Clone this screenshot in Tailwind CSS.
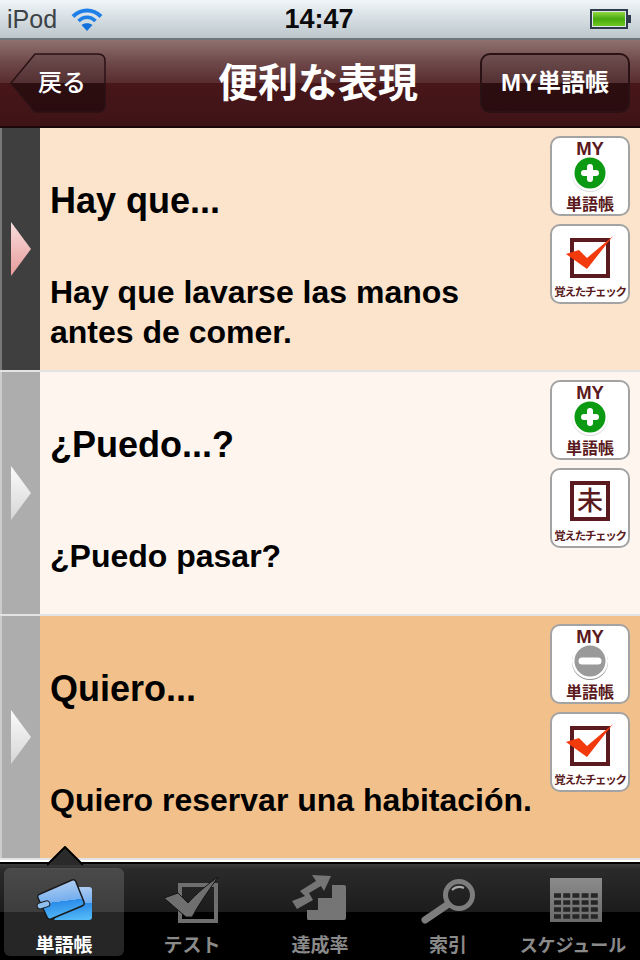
<!DOCTYPE html>
<html lang="ja">
<head>
    <meta charset="UTF-8">
    <title>便利な表現</title>
    <meta name="viewport" content="width=device-width, initial-scale=1.0">
    <script src="https://cdn.jsdelivr.net/npm/@tailwindcss/browser@4"></script>
</head>
<body class="bg-black">
<div class="relative w-[640px] h-[960px] overflow-hidden flex flex-col font-['Liberation_Sans','Noto_Sans_CJK_JP',sans-serif]">

    <!-- status bar -->
    <div class="h-[40px] flex items-center justify-between pl-[7px] pr-[9px] bg-gradient-to-b from-[#f0f6f9] to-[#bcc6cb] border-b-2 border-[#6d767d]">
        <div class="w-[200px] flex items-center gap-[14px]">
            <span class="text-[25px] leading-none text-[#3c4246]">iPod</span>
            <svg width="32" height="26" viewBox="0 0 32 26" fill="none">
                <path d="M2 10.500C10 2.500 22 2.500 30 10.500" stroke="#1f7fe8" stroke-width="4"/>
                <path d="M7.500 15C12.500 10 19.500 10 24.500 15" stroke="#1f7fe8" stroke-width="3.500"/>
                <path d="M16 25L10.500 19C13.500 16.500 18.500 16.500 21.500 19Z" fill="#1272dc"/>
            </svg>
        </div>
        <span class="text-[27px] leading-none font-bold text-[#0a0a0a]">14:47</span>
        <div class="w-[200px] flex justify-end items-center">
            <div class="w-[38px] h-[20px] border-2 border-[#2f3b4c] p-[1px] bg-[#dfe5e8]">
                <div class="h-full bg-gradient-to-b from-[#8fd93d] via-[#46a80c] to-[#6fc81f]"></div>
            </div>
            <div class="w-[3px] h-[8px] bg-[#2f3b4c]"></div>
        </div>
    </div>

    <!-- nav bar -->
    <div class="h-[88px] flex items-center justify-between px-[10px] border-b-2 border-[#1c0709] bg-[linear-gradient(#8f7170_0%,#6f4a4b_25%,#592c2f_50%,#471619_50%,#3f1417_100%)]">
        <div class="w-[146px]">
            <div class="relative w-[96px] h-[60px] flex items-center justify-center pl-[8px]">
                <svg class="absolute inset-0" width="96" height="60" viewBox="0 0 96 60">
                    <defs>
                        <linearGradient id="navbtn" x1="0" y1="0" x2="0" y2="1">
                            <stop offset="0" stop-color="#6f4f50"/>
                            <stop offset="0.5" stop-color="#533032"/>
                            <stop offset="0.5" stop-color="#2c0d10"/>
                            <stop offset="1" stop-color="#2a0c0f"/>
                        </linearGradient>
                    </defs>
                    <path d="M1 30L25 1H88Q95 1 95 8V52Q95 59 88 59H25Z" fill="url(#navbtn)" stroke="#2a1214" stroke-width="1.500"/>
                </svg>
                <span class="relative text-[24px] leading-none font-medium text-white">戻る</span>
            </div>
        </div>
        <h1 class="text-[40px] leading-none font-bold text-white">便利な表現</h1>
        <div class="w-[150px] h-[60px] flex items-center justify-center rounded-[10px] border-2 border-[#2a1214] bg-[linear-gradient(#6f4f50_0%,#533032_50%,#2c0d10_50%,#2a0c0f_100%)]">
            <span class="text-[24px] leading-none font-bold text-white">MY単語帳</span>
        </div>
    </div>

    <!-- row 1 -->
    <div class="h-[242px] flex bg-[#fbe3cc]">
        <div class="w-[40px] flex items-center bg-[#3f3f3f] border-l-2 border-[#777777]">
            <svg class="ml-[8px]" width="22" height="56" viewBox="0 0 22 56">
                <defs>
                    <linearGradient id="pink" x1="0" y1="0" x2="0" y2="1">
                        <stop offset="0" stop-color="#f8dedd"/>
                        <stop offset="1" stop-color="#e89a9a"/>
                    </linearGradient>
                </defs>
                <path d="M1 1L21 28L1 55Z" fill="url(#pink)"/>
            </svg>
        </div>
        <div class="flex-1 pl-[10px] text-black font-bold">
            <div class="h-[130px] pt-[16px] flex items-center text-[36px] leading-none">Hay que...</div>
            <div class="h-[108px] flex items-center text-[32px] leading-[40px]">Hay que lavarse las manos<br>antes de comer.</div>
        </div>
        <div class="w-[80px] mr-[10px] pt-[8px] flex flex-col gap-[8px]">
            <div class="h-[80px] flex flex-col items-center rounded-[10px] border-2 border-[#a3a3a3] bg-white text-[#5a1a20] font-bold">
                <span class="text-[18.500px] leading-[18px] mt-[2px]">MY</span>
                <svg class="-mt-[4px]" width="40" height="38" viewBox="0 0 40 38">
                    <circle cx="20" cy="20" r="18" fill="#d9d9d9"/>
                    <circle cx="20" cy="19" r="18" fill="#ffffff"/>
                    <circle cx="20" cy="19" r="15.500" fill="#0b9a12"/>
                    <path d="M20 13V25M14 19H26" stroke="#ffffff" stroke-width="6" stroke-linecap="round"/>
                </svg>
                <span class="text-[16px] leading-[18px] mt-[4px]">単語帳</span>
            </div>
            <div class="h-[80px] flex flex-col items-center rounded-[10px] border-2 border-[#a3a3a3] bg-white text-[#5a1a20] font-bold">
                <svg class="mt-[10px]" width="48" height="44" viewBox="0 0 48 44">
                    <rect x="6" y="4" width="36" height="36" fill="#ffffff" stroke="#5a1a20" stroke-width="4"/>
                    <path d="M0 18L13 14L21 22L47 0L21 33Z" fill="#f23a0c"/>
                </svg>
                <span class="text-[11.500px] leading-none mt-[7px] tracking-[-1.300px] whitespace-nowrap">覚えたチェック</span>
            </div>
        </div>
    </div>
    <div class="h-[2px] bg-[#e3e3e3]"></div>

    <!-- row 2 -->
    <div class="h-[242px] flex bg-[#fdf5ee]">
        <div class="w-[40px] flex items-center bg-[#adadad] border-l-2 border-[#cccccc]">
            <svg class="ml-[8px]" width="22" height="56" viewBox="0 0 22 56">
                <defs>
                    <linearGradient id="grey" x1="0" y1="0" x2="0" y2="1">
                        <stop offset="0" stop-color="#fbfbfb"/>
                        <stop offset="1" stop-color="#d6d6d6"/>
                    </linearGradient>
                </defs>
                <path d="M1 1L21 28L1 55Z" fill="url(#grey)"/>
            </svg>
        </div>
        <div class="flex-1 pl-[10px] text-black font-bold">
            <div class="h-[130px] pt-[16px] flex items-center text-[36px] leading-none">¿Puedo...?</div>
            <div class="h-[108px] flex items-center text-[32px] leading-[40px]">¿Puedo pasar?</div>
        </div>
        <div class="w-[80px] mr-[10px] pt-[8px] flex flex-col gap-[8px]">
            <div class="h-[80px] flex flex-col items-center rounded-[10px] border-2 border-[#a3a3a3] bg-white text-[#5a1a20] font-bold">
                <span class="text-[18.500px] leading-[18px] mt-[2px]">MY</span>
                <svg class="-mt-[4px]" width="40" height="38" viewBox="0 0 40 38">
                    <circle cx="20" cy="20" r="18" fill="#d9d9d9"/>
                    <circle cx="20" cy="19" r="18" fill="#ffffff"/>
                    <circle cx="20" cy="19" r="15.500" fill="#0b9a12"/>
                    <path d="M20 13V25M14 19H26" stroke="#ffffff" stroke-width="6" stroke-linecap="round"/>
                </svg>
                <span class="text-[16px] leading-[18px] mt-[4px]">単語帳</span>
            </div>
            <div class="h-[80px] flex flex-col items-center rounded-[10px] border-2 border-[#a3a3a3] bg-white text-[#5a1a20] font-bold">
                <div class="mt-[11px] w-[40px] h-[40px] flex items-center justify-center border-4 border-[#5a1a20] text-[26px] leading-none font-medium">未</div>
                <span class="text-[11.500px] leading-none mt-[10px] tracking-[-1.300px] whitespace-nowrap">覚えたチェック</span>
            </div>
        </div>
    </div>
    <div class="h-[2px] bg-[#e3e3e3]"></div>

    <!-- row 3 -->
    <div class="h-[242px] flex bg-[#f2c18b]">
        <div class="w-[40px] flex items-center bg-[#adadad] border-l-2 border-[#cccccc]">
            <svg class="ml-[8px]" width="22" height="56" viewBox="0 0 22 56">
                <path d="M1 1L21 28L1 55Z" fill="url(#grey)"/>
            </svg>
        </div>
        <div class="flex-1 pl-[10px] text-black font-bold">
            <div class="h-[130px] pt-[16px] flex items-center text-[36px] leading-none">Quiero...</div>
            <div class="h-[108px] flex items-center text-[32px] leading-[40px]">Quiero reservar una habitación.</div>
        </div>
        <div class="w-[80px] mr-[10px] pt-[8px] flex flex-col gap-[8px]">
            <div class="h-[80px] flex flex-col items-center rounded-[10px] border-2 border-[#a3a3a3] bg-white text-[#5a1a20] font-bold">
                <span class="text-[18.500px] leading-[18px] mt-[2px]">MY</span>
                <svg class="-mt-[4px]" width="40" height="38" viewBox="0 0 40 38">
                    <circle cx="20" cy="20" r="18" fill="#8f8f8f"/>
                    <circle cx="20" cy="19" r="18" fill="#ffffff"/>
                    <circle cx="20" cy="19" r="15.500" fill="#9a9a9a"/>
                    <path d="M12 19H28" stroke="#ffffff" stroke-width="7" stroke-linecap="round"/>
                </svg>
                <span class="text-[16px] leading-[18px] mt-[4px]">単語帳</span>
            </div>
            <div class="h-[80px] flex flex-col items-center rounded-[10px] border-2 border-[#a3a3a3] bg-white text-[#5a1a20] font-bold">
                <svg class="mt-[10px]" width="48" height="44" viewBox="0 0 48 44">
                    <rect x="6" y="4" width="36" height="36" fill="#ffffff" stroke="#5a1a20" stroke-width="4"/>
                    <path d="M0 18L13 14L21 22L47 0L21 33Z" fill="#f23a0c"/>
                </svg>
                <span class="text-[11.500px] leading-none mt-[7px] tracking-[-1.300px] whitespace-nowrap">覚えたチェック</span>
            </div>
        </div>
    </div>
    <div class="h-[2px] bg-[#e3e3e3]"></div>
    <div class="h-[2px] bg-white"></div>

    <!-- tab bar -->
    <div class="relative flex-1 flex border-t-2 border-black bg-[linear-gradient(#3c3c3c_0px,#2a2a2a_6px,#1c1c1c_48px,#000000_48px)]">
        <div class="w-[128px] p-[4px]">
            <div class="h-[88px] flex flex-col items-center justify-between rounded-[6px] bg-white/15">
                <svg class="mt-[10px]" width="60" height="46" viewBox="0 0 60 46">
                    <defs>
                        <linearGradient id="card" x1="0.4" y1="0" x2="0.55" y2="1">
                            <stop offset="0" stop-color="#b4d0f4"/>
                            <stop offset="0.55" stop-color="#74aeee"/>
                            <stop offset="0.55" stop-color="#2a8cea"/>
                            <stop offset="1" stop-color="#55baf7"/>
                        </linearGradient>
                    </defs>
                    <path d="M42 9H55Q58 9 58 12V39Q58 42 55 42H20Z" fill="url(#card)"/>
                    <path d="M6 16L38 2Q41 1 42 4L50 24Q51 27 48 28L17 41Q14 42 13 39L4 20Q3 17 6 16Z" fill="url(#card)" stroke="#1b1b1b" stroke-width="1.500"/>
                    <rect x="3" y="24" width="13" height="6" rx="3" transform="rotate(-18 9 27)" fill="#8fc0ef" stroke="#1b1b1b"/>
                </svg>
                <span class="text-[19px] leading-[20px] font-bold text-white">単語帳</span>
            </div>
        </div>
        <div class="w-[128px] flex flex-col items-center justify-between pb-[4px]">
            <svg class="mt-[13px]" width="60" height="46" viewBox="0 0 60 46">
                <rect x="18" y="8" width="36" height="36" fill="none" stroke="#6f6f6f" stroke-width="4"/>
                <path d="M2 21L16 16L26 26C34 17 46 7 56 0C47 13 37 27 30 40H24Z" fill="#6f6f6f" stroke="#141414"/>
            </svg>
            <span class="text-[19px] leading-[20px] font-bold text-[#8a8a8a]">テスト</span>
        </div>
        <div class="w-[128px] flex flex-col items-center justify-between pb-[4px]">
            <svg class="mt-[11px]" width="56" height="46" viewBox="0 0 56 46">
                <path d="M16 45Q15 45 15 43V35H26V23H40V10H52Q54 10 54 12V43Q54 45 52 45Z" fill="#757575"/>
                <path d="M39 1L20 0L24 6L8 16L13 21L0 26L5 34L21 25L17 18L29 11L32 16Z" fill="#757575"/>
            </svg>
            <span class="text-[19px] leading-[20px] font-bold text-[#8a8a8a]">達成率</span>
        </div>
        <div class="w-[128px] flex flex-col items-center justify-between pb-[4px]">
            <svg class="mt-[15px]" width="56" height="46" viewBox="0 0 56 46">
                <circle cx="39" cy="16" r="13.500" fill="none" stroke="#7d7d7d" stroke-width="5"/>
                <path d="M32 11Q37 6 44 9" fill="none" stroke="#a8a8a8" stroke-width="2"/>
                <path d="M27 26L5 41" stroke="#7d7d7d" stroke-width="7" stroke-linecap="round"/>
            </svg>
            <span class="text-[19px] leading-[20px] font-bold text-[#8a8a8a]">索引</span>
        </div>
        <div class="w-[128px] flex flex-col items-center justify-between pb-[4px]">
            <svg class="mt-[14px]" width="52" height="44" viewBox="0 0 52 44">
                <defs>
                    <linearGradient id="cal" x1="0" y1="0" x2="0" y2="1">
                        <stop offset="0" stop-color="#8a8a8a"/>
                        <stop offset="1" stop-color="#6b6b6b"/>
                    </linearGradient>
                </defs>
                <rect x="0" y="0" width="52" height="44" fill="url(#cal)"/>
                <path d="M4 17.500H48M4 24.500H48M4 31.500H48M4 38.500H48" stroke="#262626" stroke-width="4.500" stroke-dasharray="7 2.200"/>
            </svg>
            <span class="text-[18px] leading-[20px] font-bold text-[#8a8a8a] -ml-[6px]">スケジュール</span>
        </div>

        <!-- pointer above the selected tab -->
        <svg class="absolute left-[47px] top-[-18px]" width="36" height="20" viewBox="0 0 36 20">
            <path d="M0 19L18 1L36 19" fill="#2a2a2a" stroke="#000000" stroke-width="2"/>
        </svg>
    </div>
</div>
</body>
</html>
